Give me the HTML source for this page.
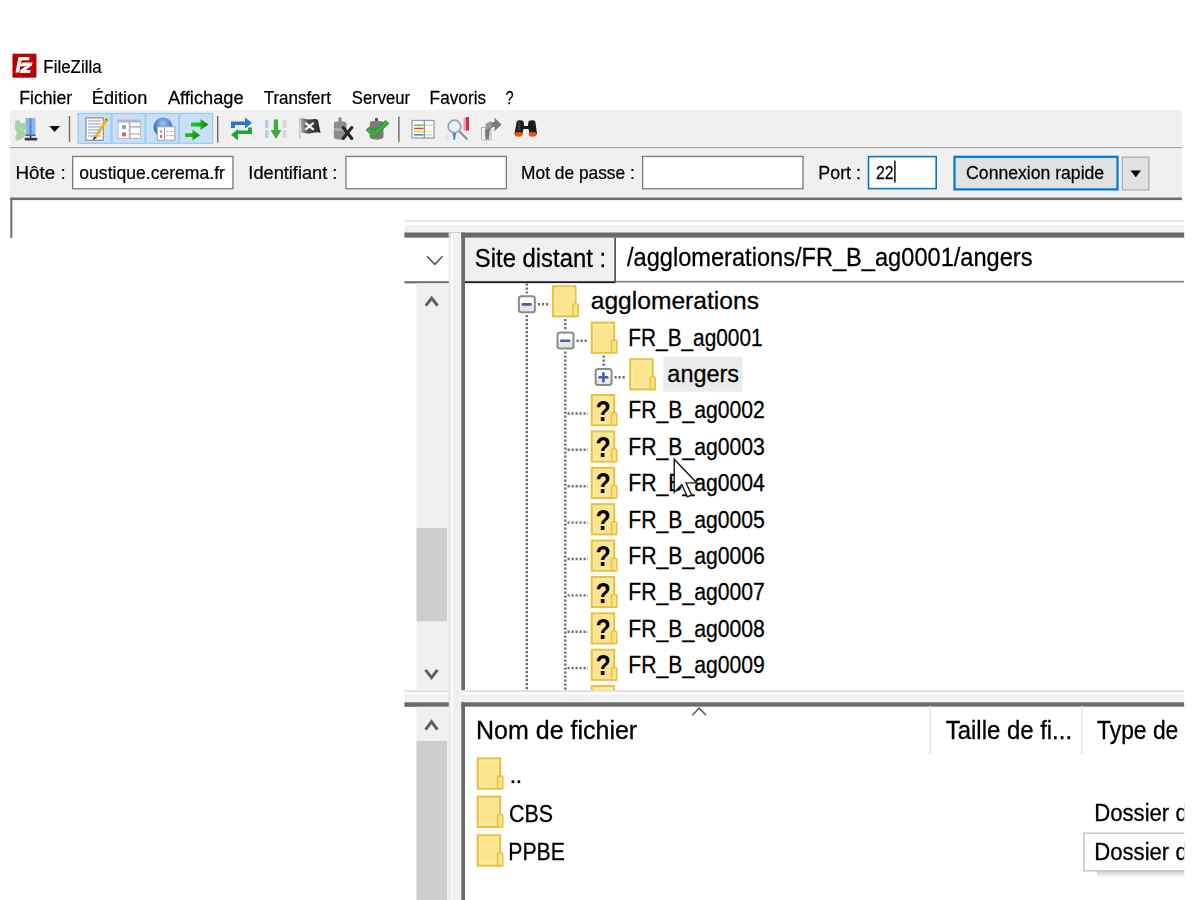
<!DOCTYPE html>
<html><head><meta charset="utf-8"><style>
html,body{margin:0;padding:0;background:#fff;width:1200px;height:900px;overflow:hidden}
svg{display:block;filter:blur(0.35px)}
text{font-family:"Liberation Sans",sans-serif;white-space:pre}
</style></head><body>
<svg width="1200" height="900" viewBox="0 0 1200 900">
<defs><clipPath id="cpU"><rect x="465" y="283.4" width="719.4" height="406.6"/></clipPath><clipPath id="cpL"><rect x="465" y="706.8" width="719.4" height="193.2"/></clipPath><clipPath id="cpR"><rect x="0" y="0" width="1184.4" height="900"/></clipPath>
<linearGradient id="flagg" x1="0" y1="0" x2="1" y2="0"><stop offset="0" stop-color="#b0b0b0"/><stop offset="0.35" stop-color="#505050"/><stop offset="1" stop-color="#2a2a2a"/></linearGradient><linearGradient id="shadg" x1="0" y1="0" x2="0" y2="1"><stop offset="0" stop-color="#c8c8c8"/><stop offset="1" stop-color="#ffffff"/></linearGradient>
<linearGradient id="arrg" x1="0" y1="0" x2="1" y2="0"><stop offset="0" stop-color="#14d014"/><stop offset="0.6" stop-color="#18a818"/><stop offset="1" stop-color="#1f7a1f"/></linearGradient><radialGradient id="globg" cx="0.5" cy="0.3" r="0.7"><stop offset="0" stop-color="#9cc0ee"/><stop offset="0.55" stop-color="#4f86d8"/><stop offset="1" stop-color="#1a4fb0"/></radialGradient>
<linearGradient id="boxg" x1="0" y1="0" x2="0" y2="1"><stop offset="0" stop-color="#ffffff"/><stop offset="0.55" stop-color="#fafafa"/><stop offset="0.6" stop-color="#e8e8e8"/><stop offset="1" stop-color="#e4e4e4"/></linearGradient>
</defs>
<g>
<rect x="12.6" y="53.8" width="23.7" height="23.7" fill="#c00000"/>
<rect x="13.1" y="54.3" width="22.7" height="22.7" fill="none" stroke="#9a0000" stroke-width="1" stroke-dasharray="1.2,1"/>
<path d="M15.5,72.5 L18.5,57 L29.5,57 L29,60.3 L21.6,60.3 L21,63.3 L26.2,63.3 L25.6,66.3 L20.4,66.3 L19.2,72.5 Z" fill="#fff"/>
<path d="M22.6,62.6 L32.5,62.6 L32,65.3 L25.6,70 L30.6,70 L30.1,73 L19.8,73 L20.3,70.3 L26.8,65.6 L22.1,65.6 Z" fill="#fff"/>
</g>
<rect x="10" y="110" width="1172" height="37.5" fill="#f0f0f0"/>
<rect x="10" y="147" width="1172" height="1.3" fill="#a0a0a0"/>
<rect x="10" y="148.3" width="1172" height="49.2" fill="#f0f0f0"/>
<rect x="10" y="197.5" width="1172" height="2.6" fill="#6e6e6e"/>
<rect x="10.3" y="198" width="2" height="40" fill="#6e6e6e"/>
<rect x="72.65" y="156.45" width="160.30" height="32.30" fill="#fff" stroke="#7a7a7a" stroke-width="1.3"/>
<rect x="345.95" y="156.45" width="160.40" height="32.30" fill="#fff" stroke="#7a7a7a" stroke-width="1.3"/>
<rect x="642.65" y="156.45" width="160.30" height="32.30" fill="#fff" stroke="#7a7a7a" stroke-width="1.3"/>
<rect x="868.50" y="156.60" width="67.70" height="32.00" fill="#fff" stroke="#0078d7" stroke-width="1.6"/>
<rect x="894.2" y="160.6" width="1.4" height="22" fill="#000"/>
<rect x="954.5" y="156.8" width="163" height="32.6" fill="#e1e1e1" stroke="#0078d7" stroke-width="2.2"/>
<rect x="1122.3" y="157.1" width="26.6" height="32.8" fill="#e1e1e1" stroke="#adadad" stroke-width="1.3"/>
<path d="M1130.6,170.4 L1141,170.4 L1135.8,177.3 Z" fill="#000"/>
<g>
<path d="M15,121 L19,120 L21,123 L25,123 L26,128 L24,131 L26,135 L22,139 L17,141 L15,138 L17,133 L15,129 Z" fill="#9ccf94" opacity="0.85"/>
<rect x="25.5" y="118" width="10" height="18" rx="1" fill="#8fb6e6"/><rect x="25.5" y="134.5" width="10" height="1.6" fill="#3d63a8"/>
<rect x="29.3" y="118" width="2.4" height="16.5" fill="#5f8fd0"/>
<rect x="29.8" y="136" width="1.6" height="2" fill="#333"/>
<rect x="24.5" y="137.8" width="13" height="2.6" rx="1.3" fill="#3a3a3a"/>
</g>
<path d="M49.3,126 L60,126 L54.65,132 Z" fill="#111"/>
<rect x="68.8" y="116" width="1.4" height="26" fill="#6a6a6a"/>
<rect x="217" y="116" width="1.4" height="26.5" fill="#6a6a6a"/>
<rect x="398.2" y="116.5" width="1.4" height="25.5" fill="#6a6a6a"/>
<rect x="78.1" y="113.5" width="134.4" height="29.8" fill="#c9e0f4" stroke="#99ccf5" stroke-width="1.3"/>
<rect x="110.4" y="113.5" width="2.2" height="29.8" fill="#9dcdf3"/>
<rect x="144.4" y="113.5" width="2.2" height="29.8" fill="#9dcdf3"/>
<rect x="177.9" y="113.5" width="2.2" height="29.8" fill="#9dcdf3"/>
<g>
<rect x="85.9" y="117.9" width="17.4" height="22.4" fill="#fbfbfb" stroke="#959595" stroke-width="1.3"/>
<g fill="#c2c6d2">
<rect x="88" y="120" width="13" height="1.8"/><rect x="88" y="123" width="13" height="1.8"/>
<rect x="88" y="126" width="13" height="1.8"/><rect x="88" y="129" width="13" height="1.8"/>
<rect x="88" y="132" width="13" height="1.8"/><rect x="88" y="135" width="13" height="1.8"/></g>
<path d="M92.6,140.6 L94.2,136.4 L104.8,119.8 L107.4,121.2 L96.8,137.8 Z" fill="#f0b418"/>
<path d="M104.8,119.8 L105.8,118.3 L108,119.6 L107.4,121.2 Z" fill="#c8502a"/>
<path d="M92.6,140.6 L94.2,136.4 L96.8,137.8 Z" fill="#4a3a2a"/>
</g>
<g>
<rect x="117.4" y="119.6" width="23.4" height="19.3" fill="#b4b8bf"/>
<rect x="118.5" y="122.6" width="10.2" height="15.3" fill="#fff"/>
<rect x="130.6" y="122.6" width="9.2" height="3.4" fill="#fff"/>
<rect x="130.6" y="127.6" width="9.2" height="5.6" fill="#fff"/>
<rect x="130.6" y="134.6" width="9.2" height="3.3" fill="#fff"/>
<rect x="122.1" y="125.2" width="3.8" height="3.8" fill="#7aa4d8"/>
<rect x="122.1" y="132.4" width="3.8" height="4" fill="#e05a66"/>
</g>
<g>
<circle cx="163" cy="127" r="9.5" fill="url(#globg)"/>
<rect x="157.3" y="126.8" width="17.5" height="13.5" fill="#fff" stroke="#b0b0b0" stroke-width="1.2"/>
<rect x="164" y="127.5" width="1" height="12.5" fill="#a0a0a0"/>
<rect x="160" y="130" width="2" height="3" fill="#8fb2e0"/>
<rect x="160" y="135" width="2" height="3" fill="#e06070"/>
<rect x="166" y="131" width="8" height="0.9" fill="#c8c8c8"/>
<rect x="166" y="135" width="8" height="0.9" fill="#c8c8c8"/>
</g>
<g fill="url(#arrg)">
<path d="M191,122.6 L200.5,122.6 L200.5,119 L208.5,124.5 L200.5,130 L200.5,126.4 L191,126.4 Z"/>
<path d="M185,133.3 L192.5,133.3 L192.5,129.8 L200,135.2 L192.5,140.6 L192.5,137.1 L185,137.1 Z"/>
</g>
<g>
<path d="M231,128 L231,121.5 L245,121.5 L245,117.5 L252,123 L245,128.5 L245,125 L235,125 L235,128 Z" fill="#2a78dd"/>
<path d="M252,127.5 L252,134 L238,134 L238,140.5 L231,134.8 L238,129 L238,130.5 L248,130.5 L248,127.5 Z" fill="#1ea82a"/>
</g>
<g>
<rect x="265" y="120" width="3.5" height="8" fill="#a9c4e6" opacity="0.8"/>
<rect x="265" y="130" width="3.5" height="8" fill="#a9c4e6" opacity="0.8"/>
<rect x="282.5" y="120" width="4" height="8" fill="#d8d8d8"/>
<rect x="282.5" y="130" width="4" height="8" fill="#d8d8d8"/>
<path d="M273.8,119.5 L278,119.5 L278,130 L281.5,130 L275.9,139 L270.5,130 L273.8,130 Z" fill="#3cae3c"/>
</g>
<g>
<rect x="299" y="118" width="1.6" height="21" fill="#c8c8c8"/>
<path d="M300.5,118.5 C304,117.5 306,120 310,119.5 C314,119 316,118.5 318,120 L320.5,133 C317,131.5 314,133 310,133.5 C306,134 304,132 301.5,133 Z" fill="url(#flagg)"/>
<path d="M306,122 L309.5,124.8 L313,122 L314.5,123.5 L311,126.2 L314.5,129 L313,130.5 L309.5,127.7 L306,130.5 L304.5,129 L308,126.2 L304.5,123.5 Z" fill="#fff"/>
</g>
<g>
<rect x="338.5" y="117.5" width="3" height="4" fill="#808080"/>
<path d="M334,123 C334,120.5 346,120.5 346.5,123 L346.5,137 C346,140.5 334,140.5 333.8,137 Z" fill="#8c8c8c"/>
<path d="M334,128 L346.5,128 L346.5,131 L334,131 Z" fill="#a8a8a8"/>
<g stroke="#2a2a2a" stroke-width="3.2" stroke-linecap="round"><line x1="343.2" y1="127.6" x2="351.8" y2="138.4"/><line x1="351.8" y1="127.6" x2="343.2" y2="138.4"/></g>
</g>
<g>
<rect x="375" y="118" width="3" height="4" fill="#555"/>
<path d="M370,122 C370,120.5 383,120.5 383.5,122 L383.5,137 C383,140.5 370,140.5 369.8,137 Z" fill="#7a7a7a"/>
<path d="M366,130 L369.5,127 L373.5,131.5 L385.5,120.5 L389,123.5 L373.5,137.5 Z" fill="#35b535" stroke="#1f8a1f" stroke-width="0.8"/>
</g>
<g>
<rect x="412" y="120.5" width="22" height="17.5" fill="#fff" stroke="#9aa0aa" stroke-width="1.3"/>
<rect x="414" y="124.5" width="9.5" height="1.6" fill="#4ccf4c"/>
<rect x="424.5" y="124.5" width="8" height="1.6" fill="#bfe8bf"/>
<rect x="414" y="127.7" width="9.5" height="1.6" fill="#e04040"/>
<rect x="414" y="130.8" width="9.5" height="1.6" fill="#f0d020"/>
<rect x="424.5" y="130.8" width="8" height="1.6" fill="#f3ecb0"/>
<rect x="414" y="134" width="9.5" height="1.6" fill="#3a8ae0"/>
<rect x="424.5" y="134" width="8" height="1.6" fill="#c8dcf3"/>
<rect x="423.7" y="120" width="1.3" height="18.5" fill="#8a96a8"/>
</g>
<g>
<path d="M463.5,117.5 L469,117 L469,130 L463.5,131 Z" fill="#e8a0a8"/>
<rect x="466" y="117" width="3" height="13.5" fill="#d8303a"/>
<line x1="459" y1="131" x2="467.5" y2="139.5" stroke="#888" stroke-width="1.8"/>
<circle cx="454.5" cy="126.5" r="6.3" fill="#e8f2fb" stroke="#9aa4b0" stroke-width="1.8"/>
<path d="M452.5,133 L456,133 L455,140 L453.5,140 Z" fill="#4a88cc"/>
<rect x="445.5" y="135" width="4" height="5" fill="#e6e6e6"/>
</g>
<g>
<path d="M481.5,127.5 L489,127.5 L491,130 L491,140 L481.5,140 Z" fill="#f4f4f4" stroke="#b4b4b4" stroke-width="1"/>
<path d="M485,133 C485,125 488.5,122 494.5,122 L494.5,117.8 L501.5,124.6 L494.5,131.3 L494.5,127 C491.5,127 489.5,129 489.5,134 L489,139.5 L485.5,139.5 Z" fill="#7a7a7a"/>
<path d="M485.5,124 L491,121 L492,127 L486,130 Z" fill="#9a9a9a"/>
</g>
<g>
<path d="M516.5,122.5 Q517,120 519.5,120.2 L522.3,120.5 Q523.8,121 523.8,123 L524,126 L528,126 L528.2,123 Q528.2,121 529.7,120.5 L532.5,120.2 Q535,120 535.5,122.5 L537,134 L530,135 L528.5,129 L523.5,129 L522,135 L514.5,134 Z" fill="#1c1c1c"/>
<path d="M518,122 L520.5,122 L520.5,131 L517.5,131 Z" fill="#4a4a4a" opacity="0.6"/>
<ellipse cx="518.6" cy="134.3" rx="3.9" ry="2.4" fill="#ff4a10"/>
<ellipse cx="532.6" cy="134.3" rx="3.9" ry="2.4" fill="#ff4a10"/>
</g>
<rect x="404.4" y="220.3" width="780.0000000000001" height="1.8" fill="#e3e3e3"/>
<rect x="404.4" y="225" width="780.0000000000001" height="7.5" fill="#f0f0f0"/>
<rect x="404.4" y="232.5" width="780.0000000000001" height="5.3" fill="#6a6a6a"/>
<rect x="404.4" y="237.8" width="45" height="43.4" fill="#fff"/>
<rect x="404.4" y="281.2" width="45" height="2.2" fill="#6e6e6e"/>
<path d="M427,256.3 L434.8,264.3 L442.6,256.3" fill="none" stroke="#555" stroke-width="1.6"/>
<rect x="416.5" y="283.4" width="32.2" height="406.6" fill="#f0f0f0"/>
<rect x="416.5" y="528" width="30.5" height="93.3" fill="#cdcdcd"/>
<path d="M425.8,305.6 L431.7,298.2 L437.6,305.6" fill="none" stroke="#606060" stroke-width="3.0" stroke-linejoin="miter"/>
<path d="M425.5,669.8 L431.5,677.6 L437.5,669.8" fill="none" stroke="#606060" stroke-width="3.0" stroke-linejoin="miter"/>
<rect x="448.7" y="232.5" width="2" height="700" fill="#e3e3e3"/>
<rect x="450.7" y="232.5" width="2.3" height="700" fill="#fafafa"/>
<rect x="453" y="232.5" width="8.3" height="700" fill="#f0f0f0"/>
<rect x="461.3" y="232.5" width="3.7" height="457.5" fill="#6a6a6a"/>
<rect x="465" y="237.8" width="150" height="43.5" fill="#f0f0f0"/>
<rect x="614.3" y="237.8" width="1.7" height="44" fill="#555"/>
<rect x="465" y="281.2" width="150.5" height="2.2" fill="#222"/>
<rect x="616" y="237.8" width="568.4" height="43.4" fill="#fff"/>
<rect x="616" y="280.8" width="568.4" height="1.8" fill="#8a8a8a"/>
<rect x="465" y="283.4" width="719.4" height="406.6" fill="#fff"/>
<rect x="404.4" y="690" width="780.0000000000001" height="2.4" fill="#e3e3e3"/>
<rect x="404.4" y="692.4" width="780.0000000000001" height="2.6" fill="#fafafa"/>
<rect x="404.4" y="695" width="780.0000000000001" height="7.3" fill="#f0f0f0"/>
<rect x="404.4" y="702.3" width="45" height="4.5" fill="#6a6a6a"/>
<rect x="461.3" y="702.3" width="723.1" height="4.5" fill="#6a6a6a"/>
<rect x="448.7" y="690" width="2" height="17" fill="#e3e3e3"/>
<rect x="450.7" y="690" width="2.3" height="17" fill="#fafafa"/>
<rect x="453" y="690" width="8.3" height="17" fill="#f0f0f0"/>
<rect x="416.5" y="706.8" width="32.2" height="193.2" fill="#f0f0f0"/>
<rect x="416.5" y="741" width="30.5" height="159" fill="#cdcdcd"/>
<path d="M425.5,729.6 L431.5,721.8 L437.5,729.6" fill="none" stroke="#606060" stroke-width="3.0" stroke-linejoin="miter"/>
<rect x="461.3" y="702.3" width="3.7" height="197.7" fill="#6a6a6a"/>
<rect x="465" y="706.8" width="719.4" height="193.2" fill="#fff"/>
<rect x="929.3" y="706" width="1.5" height="48" fill="#e5e5e5"/>
<rect x="1081" y="706" width="1.5" height="48" fill="#e5e5e5"/>
<path d="M692.3,715.3 L699.2,708.2 L706.1,715.3" fill="none" stroke="#606060" stroke-width="1.6"/>
<line x1="526.8" y1="283.5" x2="526.8" y2="293.5" stroke="#707070" stroke-width="2.4" stroke-dasharray="2.2,1.8"/>
<line x1="526.8" y1="315" x2="526.8" y2="690" stroke="#707070" stroke-width="2.4" stroke-dasharray="2.2,1.8"/>
<line x1="565.3" y1="319" x2="565.3" y2="330" stroke="#707070" stroke-width="2.4" stroke-dasharray="2.2,1.8"/>
<line x1="565.3" y1="351.5" x2="565.3" y2="690" stroke="#707070" stroke-width="2.4" stroke-dasharray="2.2,1.8"/>
<line x1="603.7" y1="355.5" x2="603.7" y2="367" stroke="#707070" stroke-width="2.4" stroke-dasharray="2.2,1.8"/>
<g transform="translate(517.90,295.20)"><defs></defs><rect x="1" y="1" width="16" height="16" rx="2.5" fill="url(#boxg)" stroke="#8c8c8c" stroke-width="2"/><rect x="3.6" y="7.9" width="10.4" height="2.6" rx="1.2" fill="#4a5fa8"/></g>
<line x1="538" y1="304.3" x2="549.5" y2="304.3" stroke="#707070" stroke-width="2.4" stroke-dasharray="2.2,1.8"/>
<g transform="translate(552.10,285.20)"><rect x="1" y="1" width="22.5" height="30.200000000000003" fill="#fde48f" stroke="#e8c23e" stroke-width="2"/><rect x="3" y="3" width="18.5" height="26.200000000000003" fill="none" stroke="#fdeaa8" stroke-width="1.2"/><path d="M20.9,31.200000000000003 L20.9,19.676000000000002 Q20.9,18.676000000000002 21.9,18.676000000000002 L24.7,18.676000000000002 Q26.1,18.676000000000002 26.1,20.076 L26.1,31.200000000000003 Z" fill="#fbe089" stroke="#e8c23e" stroke-width="1.5"/></g>
<g transform="translate(556.50,331.60)"><defs></defs><rect x="1" y="1" width="16" height="16" rx="2.5" fill="url(#boxg)" stroke="#8c8c8c" stroke-width="2"/><rect x="3.6" y="7.9" width="10.4" height="2.6" rx="1.2" fill="#4a5fa8"/></g>
<line x1="576.5" y1="340.7" x2="588" y2="340.7" stroke="#707070" stroke-width="2.4" stroke-dasharray="2.2,1.8"/>
<g transform="translate(590.70,321.60)"><rect x="1" y="1" width="22.5" height="30.200000000000003" fill="#fde48f" stroke="#e8c23e" stroke-width="2"/><rect x="3" y="3" width="18.5" height="26.200000000000003" fill="none" stroke="#fdeaa8" stroke-width="1.2"/><path d="M20.9,31.200000000000003 L20.9,19.676000000000002 Q20.9,18.676000000000002 21.9,18.676000000000002 L24.7,18.676000000000002 Q26.1,18.676000000000002 26.1,20.076 L26.1,31.200000000000003 Z" fill="#fbe089" stroke="#e8c23e" stroke-width="1.5"/></g>
<rect x="663.3" y="356.7" width="79.2" height="35" fill="#ebebeb"/>
<g transform="translate(594.60,368.10)"><defs></defs><rect x="1" y="1" width="16" height="16" rx="2.5" fill="url(#boxg)" stroke="#8c8c8c" stroke-width="2"/><rect x="3.6" y="7.9" width="10.4" height="2.6" rx="1.2" fill="#4a5fa8"/><rect x="7.5" y="4" width="2.6" height="10.4" rx="1.2" fill="#4a5fa8"/></g>
<line x1="614.5" y1="377.2" x2="626" y2="377.2" stroke="#707070" stroke-width="2.4" stroke-dasharray="2.2,1.8"/>
<g transform="translate(629.20,358.20)"><rect x="1" y="1" width="22.5" height="30.200000000000003" fill="#fde48f" stroke="#e8c23e" stroke-width="2"/><rect x="3" y="3" width="18.5" height="26.200000000000003" fill="none" stroke="#fdeaa8" stroke-width="1.2"/><path d="M20.9,31.200000000000003 L20.9,19.676000000000002 Q20.9,18.676000000000002 21.9,18.676000000000002 L24.7,18.676000000000002 Q26.1,18.676000000000002 26.1,20.076 L26.1,31.200000000000003 Z" fill="#fbe089" stroke="#e8c23e" stroke-width="1.5"/></g>
<line x1="567.5" y1="413.44000000000005" x2="588" y2="413.44000000000005" stroke="#707070" stroke-width="2.4" stroke-dasharray="2.2,1.8"/>
<g clip-path="url(#cpU)"><g transform="translate(590.70,394.04)"><rect x="1" y="1" width="22.5" height="30.200000000000003" fill="#fde48f" stroke="#e8c23e" stroke-width="2"/><rect x="3" y="3" width="18.5" height="26.200000000000003" fill="none" stroke="#fdeaa8" stroke-width="1.2"/><path d="M20.9,31.200000000000003 L20.9,19.676000000000002 Q20.9,18.676000000000002 21.9,18.676000000000002 L24.7,18.676000000000002 Q26.1,18.676000000000002 26.1,20.076 L26.1,31.200000000000003 Z" fill="#fbe089" stroke="#e8c23e" stroke-width="1.5"/><text transform="translate(12.35,26.60) scale(0.86,1)" font-size="29" font-weight="bold" text-anchor="middle" fill="#000" stroke="#fff5a0" stroke-width="0.6" paint-order="stroke" font-family="Liberation Sans">?</text></g></g>
<line x1="567.5" y1="449.82000000000005" x2="588" y2="449.82000000000005" stroke="#707070" stroke-width="2.4" stroke-dasharray="2.2,1.8"/>
<g clip-path="url(#cpU)"><g transform="translate(590.70,430.42)"><rect x="1" y="1" width="22.5" height="30.200000000000003" fill="#fde48f" stroke="#e8c23e" stroke-width="2"/><rect x="3" y="3" width="18.5" height="26.200000000000003" fill="none" stroke="#fdeaa8" stroke-width="1.2"/><path d="M20.9,31.200000000000003 L20.9,19.676000000000002 Q20.9,18.676000000000002 21.9,18.676000000000002 L24.7,18.676000000000002 Q26.1,18.676000000000002 26.1,20.076 L26.1,31.200000000000003 Z" fill="#fbe089" stroke="#e8c23e" stroke-width="1.5"/><text transform="translate(12.35,26.60) scale(0.86,1)" font-size="29" font-weight="bold" text-anchor="middle" fill="#000" stroke="#fff5a0" stroke-width="0.6" paint-order="stroke" font-family="Liberation Sans">?</text></g></g>
<line x1="567.5" y1="486.20000000000005" x2="588" y2="486.20000000000005" stroke="#707070" stroke-width="2.4" stroke-dasharray="2.2,1.8"/>
<g clip-path="url(#cpU)"><g transform="translate(590.70,466.80)"><rect x="1" y="1" width="22.5" height="30.200000000000003" fill="#fde48f" stroke="#e8c23e" stroke-width="2"/><rect x="3" y="3" width="18.5" height="26.200000000000003" fill="none" stroke="#fdeaa8" stroke-width="1.2"/><path d="M20.9,31.200000000000003 L20.9,19.676000000000002 Q20.9,18.676000000000002 21.9,18.676000000000002 L24.7,18.676000000000002 Q26.1,18.676000000000002 26.1,20.076 L26.1,31.200000000000003 Z" fill="#fbe089" stroke="#e8c23e" stroke-width="1.5"/><text transform="translate(12.35,26.60) scale(0.86,1)" font-size="29" font-weight="bold" text-anchor="middle" fill="#000" stroke="#fff5a0" stroke-width="0.6" paint-order="stroke" font-family="Liberation Sans">?</text></g></g>
<line x1="567.5" y1="522.58" x2="588" y2="522.58" stroke="#707070" stroke-width="2.4" stroke-dasharray="2.2,1.8"/>
<g clip-path="url(#cpU)"><g transform="translate(590.70,503.18)"><rect x="1" y="1" width="22.5" height="30.200000000000003" fill="#fde48f" stroke="#e8c23e" stroke-width="2"/><rect x="3" y="3" width="18.5" height="26.200000000000003" fill="none" stroke="#fdeaa8" stroke-width="1.2"/><path d="M20.9,31.200000000000003 L20.9,19.676000000000002 Q20.9,18.676000000000002 21.9,18.676000000000002 L24.7,18.676000000000002 Q26.1,18.676000000000002 26.1,20.076 L26.1,31.200000000000003 Z" fill="#fbe089" stroke="#e8c23e" stroke-width="1.5"/><text transform="translate(12.35,26.60) scale(0.86,1)" font-size="29" font-weight="bold" text-anchor="middle" fill="#000" stroke="#fff5a0" stroke-width="0.6" paint-order="stroke" font-family="Liberation Sans">?</text></g></g>
<line x1="567.5" y1="558.96" x2="588" y2="558.96" stroke="#707070" stroke-width="2.4" stroke-dasharray="2.2,1.8"/>
<g clip-path="url(#cpU)"><g transform="translate(590.70,539.56)"><rect x="1" y="1" width="22.5" height="30.200000000000003" fill="#fde48f" stroke="#e8c23e" stroke-width="2"/><rect x="3" y="3" width="18.5" height="26.200000000000003" fill="none" stroke="#fdeaa8" stroke-width="1.2"/><path d="M20.9,31.200000000000003 L20.9,19.676000000000002 Q20.9,18.676000000000002 21.9,18.676000000000002 L24.7,18.676000000000002 Q26.1,18.676000000000002 26.1,20.076 L26.1,31.200000000000003 Z" fill="#fbe089" stroke="#e8c23e" stroke-width="1.5"/><text transform="translate(12.35,26.60) scale(0.86,1)" font-size="29" font-weight="bold" text-anchor="middle" fill="#000" stroke="#fff5a0" stroke-width="0.6" paint-order="stroke" font-family="Liberation Sans">?</text></g></g>
<line x1="567.5" y1="595.34" x2="588" y2="595.34" stroke="#707070" stroke-width="2.4" stroke-dasharray="2.2,1.8"/>
<g clip-path="url(#cpU)"><g transform="translate(590.70,575.94)"><rect x="1" y="1" width="22.5" height="30.200000000000003" fill="#fde48f" stroke="#e8c23e" stroke-width="2"/><rect x="3" y="3" width="18.5" height="26.200000000000003" fill="none" stroke="#fdeaa8" stroke-width="1.2"/><path d="M20.9,31.200000000000003 L20.9,19.676000000000002 Q20.9,18.676000000000002 21.9,18.676000000000002 L24.7,18.676000000000002 Q26.1,18.676000000000002 26.1,20.076 L26.1,31.200000000000003 Z" fill="#fbe089" stroke="#e8c23e" stroke-width="1.5"/><text transform="translate(12.35,26.60) scale(0.86,1)" font-size="29" font-weight="bold" text-anchor="middle" fill="#000" stroke="#fff5a0" stroke-width="0.6" paint-order="stroke" font-family="Liberation Sans">?</text></g></g>
<line x1="567.5" y1="631.72" x2="588" y2="631.72" stroke="#707070" stroke-width="2.4" stroke-dasharray="2.2,1.8"/>
<g clip-path="url(#cpU)"><g transform="translate(590.70,612.32)"><rect x="1" y="1" width="22.5" height="30.200000000000003" fill="#fde48f" stroke="#e8c23e" stroke-width="2"/><rect x="3" y="3" width="18.5" height="26.200000000000003" fill="none" stroke="#fdeaa8" stroke-width="1.2"/><path d="M20.9,31.200000000000003 L20.9,19.676000000000002 Q20.9,18.676000000000002 21.9,18.676000000000002 L24.7,18.676000000000002 Q26.1,18.676000000000002 26.1,20.076 L26.1,31.200000000000003 Z" fill="#fbe089" stroke="#e8c23e" stroke-width="1.5"/><text transform="translate(12.35,26.60) scale(0.86,1)" font-size="29" font-weight="bold" text-anchor="middle" fill="#000" stroke="#fff5a0" stroke-width="0.6" paint-order="stroke" font-family="Liberation Sans">?</text></g></g>
<line x1="567.5" y1="668.1" x2="588" y2="668.1" stroke="#707070" stroke-width="2.4" stroke-dasharray="2.2,1.8"/>
<g clip-path="url(#cpU)"><g transform="translate(590.70,648.70)"><rect x="1" y="1" width="22.5" height="30.200000000000003" fill="#fde48f" stroke="#e8c23e" stroke-width="2"/><rect x="3" y="3" width="18.5" height="26.200000000000003" fill="none" stroke="#fdeaa8" stroke-width="1.2"/><path d="M20.9,31.200000000000003 L20.9,19.676000000000002 Q20.9,18.676000000000002 21.9,18.676000000000002 L24.7,18.676000000000002 Q26.1,18.676000000000002 26.1,20.076 L26.1,31.200000000000003 Z" fill="#fbe089" stroke="#e8c23e" stroke-width="1.5"/><text transform="translate(12.35,26.60) scale(0.86,1)" font-size="29" font-weight="bold" text-anchor="middle" fill="#000" stroke="#fff5a0" stroke-width="0.6" paint-order="stroke" font-family="Liberation Sans">?</text></g></g>
<line x1="567.5" y1="704.48" x2="588" y2="704.48" stroke="#707070" stroke-width="2.4" stroke-dasharray="2.2,1.8"/>
<g clip-path="url(#cpU)"><g transform="translate(590.70,685.08)"><rect x="1" y="1" width="22.5" height="30.200000000000003" fill="#fde48f" stroke="#e8c23e" stroke-width="2"/><rect x="3" y="3" width="18.5" height="26.200000000000003" fill="none" stroke="#fdeaa8" stroke-width="1.2"/><path d="M20.9,31.200000000000003 L20.9,19.676000000000002 Q20.9,18.676000000000002 21.9,18.676000000000002 L24.7,18.676000000000002 Q26.1,18.676000000000002 26.1,20.076 L26.1,31.200000000000003 Z" fill="#fbe089" stroke="#e8c23e" stroke-width="1.5"/><text transform="translate(12.35,26.60) scale(0.86,1)" font-size="29" font-weight="bold" text-anchor="middle" fill="#000" stroke="#fff5a0" stroke-width="0.6" paint-order="stroke" font-family="Liberation Sans">?</text></g></g>
<g><text transform="translate(43.35,72.90) scale(0.9339,1)" font-size="18.13" fill="#000" stroke="#000" stroke-width="0.25">FileZilla</text></g>
<g><text transform="translate(19.19,104.00) scale(0.9748,1)" font-size="18.13" fill="#000" stroke="#000" stroke-width="0.25">Fichier</text></g>
<g><text transform="translate(91.85,104.00) scale(0.9994,1)" font-size="18.13" fill="#000" stroke="#000" stroke-width="0.25">Édition</text></g>
<g><text transform="translate(167.90,104.00) scale(1.0063,1)" font-size="18.13" fill="#000" stroke="#000" stroke-width="0.25">Affichage</text></g>
<g><text transform="translate(263.66,104.00) scale(0.9363,1)" font-size="18.13" fill="#000" stroke="#000" stroke-width="0.25">Transfert</text></g>
<g><text transform="translate(351.83,104.00) scale(0.9195,1)" font-size="18.13" fill="#000" stroke="#000" stroke-width="0.25">Serveur</text></g>
<g><text transform="translate(429.62,104.00) scale(0.9503,1)" font-size="18.13" fill="#000" stroke="#000" stroke-width="0.25">Favoris</text></g>
<g><text transform="translate(505.42,104.00) scale(0.8042,1)" font-size="18.13" fill="#000" stroke="#000" stroke-width="0.25">?</text></g>
<g><text transform="translate(15.50,179.30) scale(1.0208,1)" font-size="18.42" fill="#000" stroke="#000" stroke-width="0.25">Hôte :</text></g>
<g><text transform="translate(79.30,179.30) scale(0.9549,1)" font-size="18.42" fill="#000" stroke="#000" stroke-width="0.25">oustique.cerema.fr</text></g>
<g><text transform="translate(248.36,179.30) scale(0.9883,1)" font-size="18.42" fill="#000" stroke="#000" stroke-width="0.25">Identifiant :</text></g>
<g><text transform="translate(521.11,179.30) scale(0.9414,1)" font-size="18.42" fill="#000" stroke="#000" stroke-width="0.25">Mot de passe :</text></g>
<g><text transform="translate(818.37,179.30) scale(0.9678,1)" font-size="18.42" fill="#000" stroke="#000" stroke-width="0.25">Port :</text></g>
<g><text transform="translate(875.91,179.30) scale(0.8550,1)" font-size="18.42" fill="#000" stroke="#000" stroke-width="0.25">22</text></g>
<g><text transform="translate(966.12,179.30) scale(0.9561,1)" font-size="18.42" fill="#000" stroke="#000" stroke-width="0.25">Connexion rapide</text></g>
<g><text transform="translate(474.85,266.70) scale(0.9322,1)" font-size="25.59" fill="#000" stroke="#000" stroke-width="0.3">Site distant :</text></g>
<g clip-path="url(#cpR)"><text transform="translate(627.00,266.30) scale(0.9231,1)" font-size="25.59" fill="#000" stroke="#000" stroke-width="0.3">/agglomerations/FR_B_ag0001/angers</text></g>
<g><text transform="translate(590.72,309.20) scale(1.0007,1)" font-size="24.60" fill="#000" stroke="#000" stroke-width="0.3">agglomerations</text></g>
<g><text transform="translate(628.33,345.80) scale(0.8466,1)" font-size="24.60" fill="#000" stroke="#000" stroke-width="0.3">FR_B_ag0001</text></g>
<g><text transform="translate(667.36,381.90) scale(0.9524,1)" font-size="24.60" fill="#000" stroke="#000" stroke-width="0.3">angers</text></g>
<g><text transform="translate(476.00,738.70) scale(0.9889,1)" font-size="25.30" fill="#000" stroke="#000" stroke-width="0.3">Nom de fichier</text></g>
<g><text transform="translate(945.77,738.70) scale(0.9455,1)" font-size="25.30" fill="#000" stroke="#000" stroke-width="0.3">Taille de fi...</text></g>
<g clip-path="url(#cpR)"><text transform="translate(1097.04,738.70) scale(0.9028,1)" font-size="25.30" fill="#000" stroke="#000" stroke-width="0.3">Type de</text></g>
<g><text transform="translate(508.93,821.70) scale(0.8711,1)" font-size="24.60" fill="#000" stroke="#000" stroke-width="0.3">CBS</text></g>
<g><text transform="translate(508.30,860.30) scale(0.8636,1)" font-size="24.60" fill="#000" stroke="#000" stroke-width="0.3">PPBE</text></g>
<g clip-path="url(#cpR)"><text transform="translate(1094.23,821.30) scale(0.9000,1)" font-size="24.60" fill="#000" stroke="#000" stroke-width="0.3">Dossier d</text></g>
<g clip-path="url(#cpU)"><text transform="translate(628.30,418.44) scale(0.8614,1)" font-size="24.60" fill="#000" stroke="#000" stroke-width="0.3">FR_B_ag0002</text></g>
<g clip-path="url(#cpU)"><text transform="translate(628.30,454.82) scale(0.8614,1)" font-size="24.60" fill="#000" stroke="#000" stroke-width="0.3">FR_B_ag0003</text></g>
<g clip-path="url(#cpU)"><text transform="translate(628.30,491.20) scale(0.8614,1)" font-size="24.60" fill="#000" stroke="#000" stroke-width="0.3">FR_B_ag0004</text></g>
<g clip-path="url(#cpU)"><text transform="translate(628.30,527.58) scale(0.8614,1)" font-size="24.60" fill="#000" stroke="#000" stroke-width="0.3">FR_B_ag0005</text></g>
<g clip-path="url(#cpU)"><text transform="translate(628.30,563.96) scale(0.8614,1)" font-size="24.60" fill="#000" stroke="#000" stroke-width="0.3">FR_B_ag0006</text></g>
<g clip-path="url(#cpU)"><text transform="translate(628.30,600.34) scale(0.8614,1)" font-size="24.60" fill="#000" stroke="#000" stroke-width="0.3">FR_B_ag0007</text></g>
<g clip-path="url(#cpU)"><text transform="translate(628.30,636.72) scale(0.8614,1)" font-size="24.60" fill="#000" stroke="#000" stroke-width="0.3">FR_B_ag0008</text></g>
<g clip-path="url(#cpU)"><text transform="translate(628.30,673.10) scale(0.8614,1)" font-size="24.60" fill="#000" stroke="#000" stroke-width="0.3">FR_B_ag0009</text></g>
<g clip-path="url(#cpU)"><text transform="translate(628.30,709.48) scale(0.8614,1)" font-size="24.60" fill="#000" stroke="#000" stroke-width="0.3">FR_B_ag0010</text></g>
<g transform="translate(476.70,757.30)"><rect x="1" y="1" width="22.5" height="30.4" fill="#fde48f" stroke="#e8c23e" stroke-width="2"/><rect x="3" y="3" width="18.5" height="26.4" fill="none" stroke="#fdeaa8" stroke-width="1.2"/><path d="M20.9,31.4 L20.9,19.791999999999998 Q20.9,18.791999999999998 21.9,18.791999999999998 L24.7,18.791999999999998 Q26.1,18.791999999999998 26.1,20.191999999999997 L26.1,31.4 Z" fill="#fbe089" stroke="#e8c23e" stroke-width="1.5"/></g>
<g transform="translate(476.70,795.60)"><rect x="1" y="1" width="22.5" height="30.4" fill="#fde48f" stroke="#e8c23e" stroke-width="2"/><rect x="3" y="3" width="18.5" height="26.4" fill="none" stroke="#fdeaa8" stroke-width="1.2"/><path d="M20.9,31.4 L20.9,19.791999999999998 Q20.9,18.791999999999998 21.9,18.791999999999998 L24.7,18.791999999999998 Q26.1,18.791999999999998 26.1,20.191999999999997 L26.1,31.4 Z" fill="#fbe089" stroke="#e8c23e" stroke-width="1.5"/></g>
<g transform="translate(476.70,834.30)"><rect x="1" y="1" width="22.5" height="30.4" fill="#fde48f" stroke="#e8c23e" stroke-width="2"/><rect x="3" y="3" width="18.5" height="26.4" fill="none" stroke="#fdeaa8" stroke-width="1.2"/><path d="M20.9,31.4 L20.9,19.791999999999998 Q20.9,18.791999999999998 21.9,18.791999999999998 L24.7,18.791999999999998 Q26.1,18.791999999999998 26.1,20.191999999999997 L26.1,31.4 Z" fill="#fbe089" stroke="#e8c23e" stroke-width="1.5"/></g>
<rect x="511.6" y="780.3" width="2.6" height="2.8" fill="#000"/><rect x="517.6" y="780.3" width="2.6" height="2.8" fill="#000"/>
<rect x="1097" y="870.5" width="90" height="7" fill="url(#shadg)"/>
<rect x="1083.8" y="833.2" width="110" height="37.6" fill="#fff" stroke="#c8c8c8" stroke-width="1.6"/>
<g clip-path="url(#cpR)"><text transform="translate(1094.23,860.00) scale(0.9000,1)" font-size="24.60" fill="#000" stroke="#000" stroke-width="0.3">Dossier d</text></g>
<rect x="1184.4" y="200" width="20" height="700" fill="#fff"/>
<g transform="translate(674.2,459.3)">
<path d="M0,0 L0,33 L7.6,25.4 L13.2,37.6 L17.4,35.6 L11.8,23.6 L22.6,23.6 Z" fill="#fff" stroke="#1a1a1a" stroke-width="1.4" stroke-linejoin="miter"/>
</g>
</svg></body></html>
